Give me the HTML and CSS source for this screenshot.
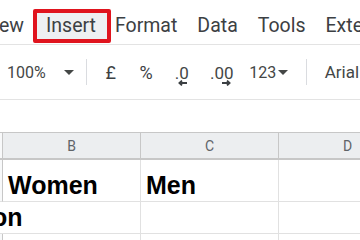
FILE: index.html
```html
<!DOCTYPE html>
<html>
<head>
<meta charset="utf-8">
<title>Sheet</title>
<link rel="stylesheet" href="styles.css">
</head>
<body>
<div class="menubar">
  <span class="menu first">ew</span>
  <span class="menu active">Insert</span>
  <span class="menu">Format</span>
  <span class="menu">Data</span>
  <span class="menu">Tools</span>
  <span class="menu">Exte</span>
</div>

<div class="toolbar">
  <span class="zoom">100%</span>
  <svg class="caret" width="10" height="5" viewBox="0 0 10 5"><path d="M0 0h10L5 5z" fill="#444746"/></svg>
  <span class="sep"></span>
  <span class="btn w36 sym">£</span>
  <span class="btn w35 sym">%</span>
  <span class="btn w36 dec">
    <span>.0</span>
    <svg width="10" height="6" viewBox="0 0 10 6" class="arr left"><path d="M9 3H2M4 0.6L1.4 3 4 5.4" stroke="#3c4043" stroke-width="1.8" fill="none"/></svg>
  </span>
  <span class="btn w44 dec">
    <span>.00</span>
    <svg width="10" height="6" viewBox="0 0 10 6" class="arr right"><path d="M1 3h7M6 0.6L8.6 3 6 5.4" stroke="#3c4043" stroke-width="1.8" fill="none"/></svg>
  </span>
  <span class="btn w50">123<svg class="caret small" width="10" height="5" viewBox="0 0 10 5"><path d="M0 0h10L5 5z" fill="#444746"/></svg></span>
  <span class="sep"></span>
  <span class="font">Arial</span>
</div>

<div class="blank"></div>

<div class="grid">
  <div class="hd rownum"></div>
  <div class="hd">B</div>
  <div class="hd">C</div>
  <div class="hd">D</div>

  <div class="cell rownum"></div>
  <div class="cell big">Women</div>
  <div class="cell big">Men</div>
  <div class="cell"></div>

  <div class="cell span2 big"><span class="cut">on</span></div>
  <div class="cell"></div>
  <div class="cell"></div>

  <div class="cell rownum"></div>
  <div class="cell"></div>
  <div class="cell"></div>
  <div class="cell"></div>
</div>
</body>
</html>
```

FILE: styles.css
```css
body{margin:0;width:360px;height:240px;overflow:hidden;background:#fff;font-family:Roboto,"Liberation Sans",sans-serif;}

.menubar{height:45px;padding-top:7px;border-bottom:1px solid #e3e3e3;display:flex;align-items:center;box-sizing:border-box;font-size:19.5px;color:#3c4043;}
.menu{margin-left:20px;line-height:26px;}
.menu.first{margin-left:-1px;}
.menu.active{margin-left:9px;margin-right:-16px;border:4px solid #e0141e;border-radius:2px;padding:0 11px 0 9px;background:#eef0f2;height:26px;}

.toolbar{height:54px;border-bottom:1px solid #e3e3e3;display:flex;align-items:center;font-size:16px;color:#444746;}
.zoom{margin-left:7px;}
.caret{margin-left:18px;}
.caret.small{margin-left:2px;margin-top:1px;}
.sep{width:1px;height:26px;background:#dadce0;margin-left:12px;margin-right:6px;}
.btn{display:flex;align-items:center;justify-content:center;height:28px;}
.sym{font-size:18px;color:#3c4043;}
.w35{width:35px;}
.w36{width:36px;}
.w44{width:44px;}
.w50{width:50px;}
.dec{flex-direction:column;align-items:center;padding-top:6px;box-sizing:border-box;font-size:17px;}
.dec span{line-height:16px;}
.arr{margin-top:-1px;}
.arr.left{margin-left:3px;}
.arr.right{margin-left:8px;}
.font{margin-left:12px;font-size:17px;}

.blank{height:32px;}

.grid{display:grid;grid-template-columns:3px 138px 138px 138px;grid-template-rows:28px 42px 32px 32px;font-family:"Liberation Sans",Arial,sans-serif;}
.hd{background:#eceef0;border-top:1px solid #c7c7c7;border-bottom:2px solid #c7c7c7;border-right:1px solid #c7c7c7;display:flex;align-items:center;justify-content:center;font-size:14px;color:#5f6368;font-family:Roboto,sans-serif;}
.cell{border-right:1px solid #e1e1e1;border-bottom:1px solid #e1e1e1;display:flex;align-items:flex-end;padding:0 0 1px 5px;box-sizing:border-box;overflow:hidden;}
.rownum{padding:0;background:#f8f9fa;}
.cell.rownum{border-right:1px solid #c7c7c7;}
.big{font-size:25px;font-weight:bold;color:#000;}
.span2{grid-column:1 / 3;padding-left:0;}
.cut{margin-left:-8px;}
```
